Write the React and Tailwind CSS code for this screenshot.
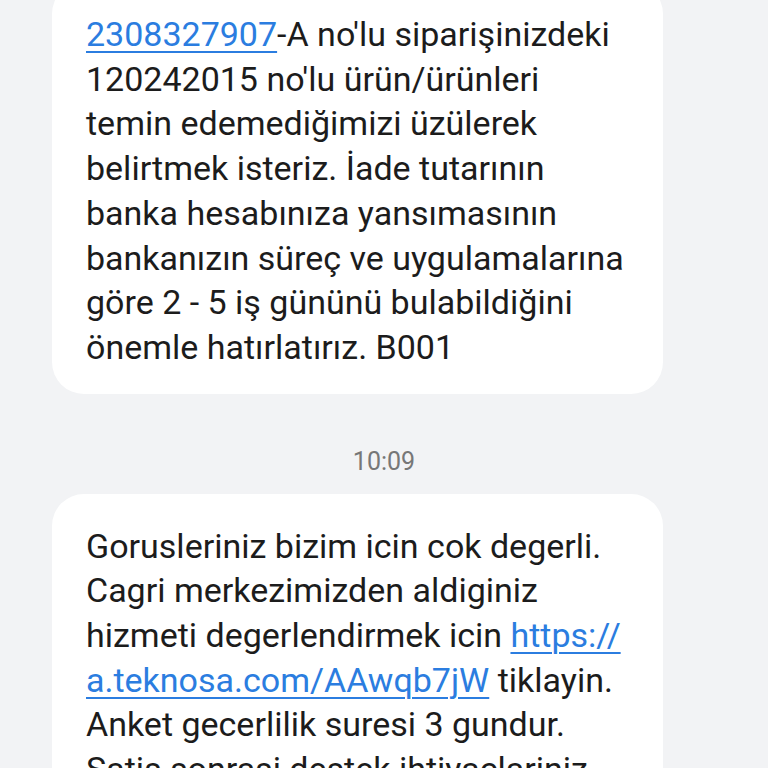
import React from "react";

const Link = ({ children }) => (
  <span className="text-[#2b7de0] underline decoration-[1.5px] underline-offset-[5px]">{children}</span>
);

const Bubble = ({ children, className = "" }) => (
  <div className={`mx-[52px] w-[611px] rounded-[32px] bg-white pl-[34px] pr-4 ${className}`}>
    <p className="text-[34px] leading-[44.7px] text-[#1c1c1c]">{children}</p>
  </div>
);

export default function App() {
  return (
    <div
      className="h-[768px] w-[768px] overflow-hidden bg-[#f2f3f5]"
      style={{ fontFamily: "Roboto, 'Noto Sans', sans-serif" }}
    >
      <div className="-mt-[18px] flex flex-col">
        <Bubble className="pt-[30px] pb-[24px]">
          <Link>2308327907</Link>-A no'lu siparişinizdeki
          <br />
          120242015 no'lu ürün/ürünleri
          <br />
          temin edemediğimizi üzülerek
          <br />
          belirtmek isteriz. İade tutarının
          <br />
          banka hesabınıza yansımasının
          <br />
          bankanızın süreç ve uygulamalarına
          <br />
          göre 2 - 5 iş gününü bulabildiğini
          <br />
          önemle hatırlatırız. B001
        </Bubble>

        <div className="flex h-[100px] items-center justify-center pt-[36px]">
          <span className="text-[25px] text-[#777777]">10:09</span>
        </div>

        <Bubble className="pt-[30px] pb-[24px]">
          Gorusleriniz bizim icin cok degerli.
          <br />
          Cagri merkezimizden aldiginiz
          <br />
          hizmeti degerlendirmek icin <Link>https://</Link>
          <br />
          <Link>a.teknosa.com/AAwqb7jW</Link> tiklayin.
          <br />
          Anket gecerlilik suresi 3 gundur.
          <br />
          Satis sonrasi destek ihtiyaclariniz
          <br />
          icin 0850 222 0 444 numarali
          <br />
          hattimizi arayabilirsiniz.
        </Bubble>
      </div>
    </div>
  );
}
